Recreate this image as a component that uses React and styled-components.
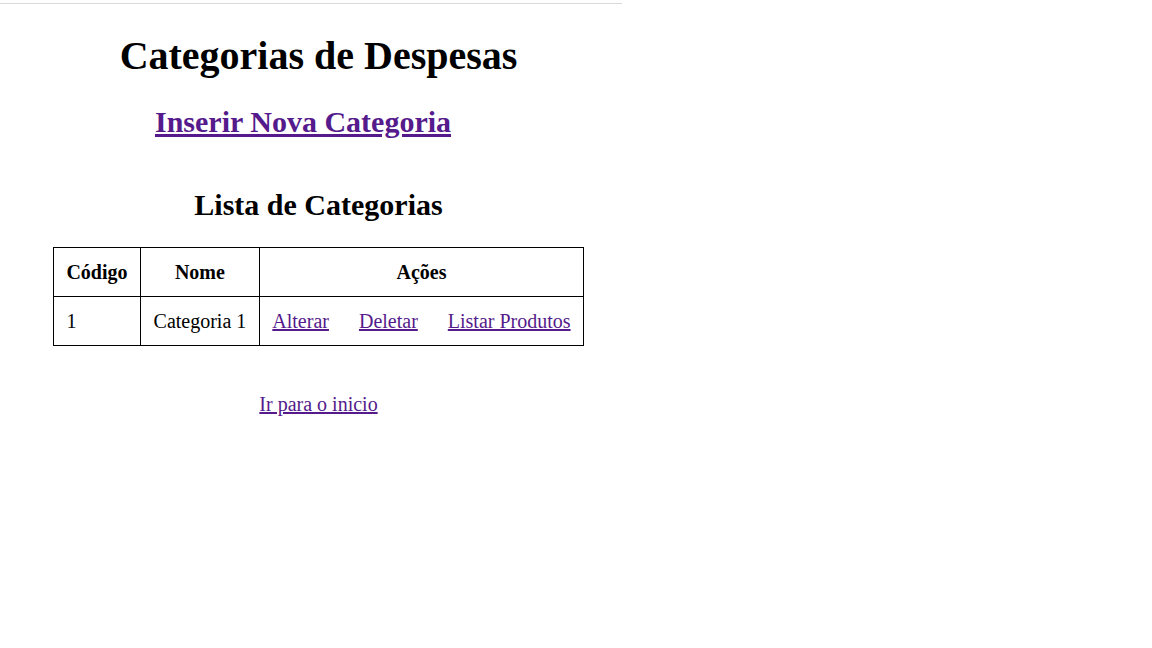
import styled, { createGlobalStyle } from 'styled-components';

const categorias = [{ codigo: 1, nome: 'Categoria 1' }];

export default function App() {
  return (
    <>
      <GlobalStyle />
      <TopRule />
      <Page>
        <Title>Categorias de Despesas</Title>
        <SubTitle>
          <Link href="#">Inserir Nova Categoria</Link>
        </SubTitle>
        <ListTitle>Lista de Categorias</ListTitle>
        <Table>
          <thead>
            <tr>
              <Th>Código</Th>
              <Th>Nome</Th>
              <Th>Ações</Th>
            </tr>
          </thead>
          <tbody>
            {categorias.map((c) => (
              <tr key={c.codigo}>
                <Td>{c.codigo}</Td>
                <Td>{c.nome}</Td>
                <Td>
                  <Actions>
                    <Link href="#">Alterar</Link>
                    <Link href="#">Deletar</Link>
                    <Link href="#">Listar Produtos</Link>
                  </Actions>
                </Td>
              </tr>
            ))}
          </tbody>
        </Table>
        <Footer>
          <Link href="#">Ir para o inicio</Link>
        </Footer>
      </Page>
    </>
  );
}

const VISITED = `#551a8b`;

const GlobalStyle = createGlobalStyle`
  body {
    margin: 0;
    background: #fff;
    color: #000;
    font-family: "Liberation Serif", "Times New Roman", serif;
    font-size: 20px;
  }
`;

const TopRule = styled.div`
  width: 622px;
  height: 1px;
  margin-top: 3px;
  background: #d9d9d9;
`;

const Page = styled.div`
  width: 617px;
  margin-left: 10px;
  text-align: center;
`;

const Title = styled.h1`
  font-size: 40px;
  font-weight: bold;
  margin: 27.5px 0 26.8px;
`;

const SubTitle = styled.h2`
  font-size: 30px;
  font-weight: bold;
  margin: 24.9px 0;
  padding-right: 31px;
`;

const ListTitle = styled.h2`
  font-size: 30px;
  font-weight: bold;
  margin: 48.7px 0 25.4px;
`;

const Link = styled.a`
  color: ${VISITED};
  text-decoration: underline;
`;

const Table = styled.table`
  margin: 0 auto;
  border-collapse: collapse;
  border: 1px solid #000;
`;

const Th = styled.th`
  border: 1px solid #000;
  padding: 12.5px;
  font-weight: bold;
  text-align: center;
`;

const Td = styled.td`
  border: 1px solid #000;
  padding: 12.5px;
  text-align: left;
`;

const Actions = styled.div`
  display: flex;
  gap: 30px;
`;

const Footer = styled.p`
  margin: 46.5px 0 0;
`;
